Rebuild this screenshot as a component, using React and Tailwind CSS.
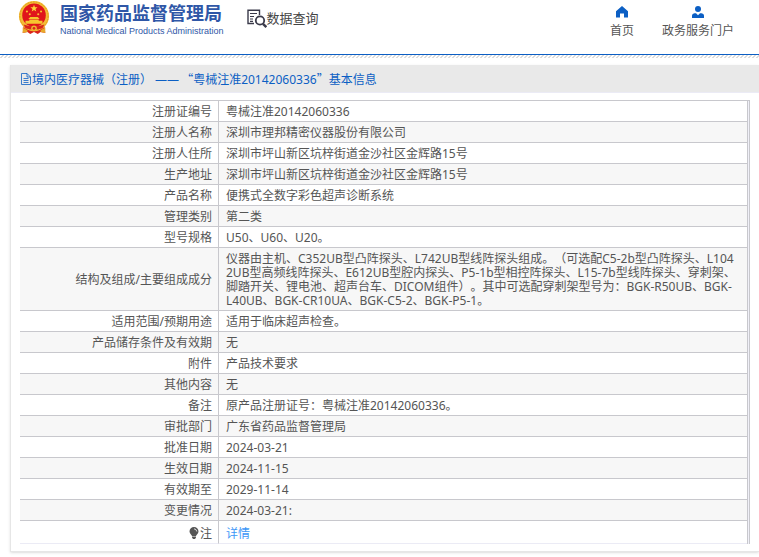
const rows = [
  { label: '注册证编号', value: '粤械注准20142060336' },
  { label: '注册人名称', value: '深圳市理邦精密仪器股份有限公司' },
  { label: '注册人住所', value: '深圳市坪山新区坑梓街道金沙社区金辉路15号' },
  { label: '生产地址', value: '深圳市坪山新区坑梓街道金沙社区金辉路15号' },
  { label: '产品名称', value: '便携式全数字彩色超声诊断系统' },
  { label: '管理类别', value: '第二类' },
  { label: '型号规格', value: 'U50、U60、U20。' },
  {
    label: '结构及组成/主要组成成分',
    value:
      '仪器由主机、C352UB型凸阵探头、L742UB型线阵探头组成。（可选配C5-2b型凸阵探头、L1042UB型高频线阵探头、E612UB型腔内探头、P5-1b型相控阵探头、L15-7b型线阵探头、穿刺架、脚踏开关、锂电池、超声台车、DICOM组件）。其中可选配穿刺架型号为：BGK-R50UB、BGK-L40UB、BGK-CR10UA、BGK-C5-2、BGK-P5-1。',
  },
  { label: '适用范围/预期用途', value: '适用于临床超声检查。' },
  { label: '产品储存条件及有效期', value: '无' },
  { label: '附件', value: '产品技术要求' },
  { label: '其他内容', value: '无' },
  { label: '备注', value: '原产品注册证号：粤械注准20142060336。' },
  { label: '审批部门', value: '广东省药品监督管理局' },
  { label: '批准日期', value: '2024-03-21' },
  { label: '生效日期', value: '2024-11-15' },
  { label: '有效期至', value: '2029-11-14' },
  { label: '变更情况', value: '2024-03-21:' },
];

const Emblem = () => (
  <svg viewBox="0 0 34 36" className="h-9 w-8 shrink-0" aria-hidden="true">
    <path d="M6 26l-1 8 5-1 3 2 4-2 4 2 3-2 5 1-1-8z" fill="#d9231c" />
    <path d="M5 28l5 3v2l-5 1zM29 28l-5 3v2l5 1z" fill="#e8a92a" />
    <circle cx="17" cy="16" r="16" fill="#f3bd35" />
    <circle cx="17" cy="16" r="15" fill="none" stroke="#e0981f" strokeWidth="1" strokeDasharray="2 1" />
    <circle cx="17" cy="15" r="12.5" fill="#e0151b" />
    <path d="M17 4l1 2.700h2.800l-2.200 1.700.8 2.700-2.400-1.600-2.400 1.600.8-2.700-2.200-1.700H16z" fill="#fbd63b" />
    <g fill="#f6c52f">
      <circle cx="9.500" cy="11" r="1.100" />
      <circle cx="12.500" cy="14" r="1.100" />
      <circle cx="21.500" cy="14" r="1.100" />
      <circle cx="24.500" cy="11" r="1.100" />
      <path d="M11 19l2-2h8l2 2zM12 19.500h10v1.500H12zM8 21h18v3H8z" />
    </g>
    <path d="M6 25q11 4 22 0l-2 4q-9 3-18 0z" fill="#d9231c" />
    <circle cx="17" cy="29" r="3" fill="#efb62e" />
    <circle cx="17" cy="29" r="1.400" fill="#d9231c" />
  </svg>
);

const SearchDocIcon = () => (
  <svg viewBox="0 0 20 20" className="size-5 shrink-0" fill="none" stroke="#3a3a4a" aria-hidden="true">
    <path d="M12.500 7V2.200H1v13.300h6" strokeWidth="1.400" />
    <path d="M3 5.500h7M3 8.500h4M3 11h3M3 13.300h3" strokeWidth="1.200" />
    <circle cx="13" cy="12.500" r="4.200" strokeWidth="1.800" />
    <path d="M16 15.800l3.300 3.300" strokeWidth="2.400" />
  </svg>
);

const HomeIcon = () => (
  <svg viewBox="0 0 12 12" className="size-3" fill="#0c5fc4" aria-hidden="true">
    <path d="M6 0L0 5.200V11.500h4V7.500h4v4h4V5.200z" />
  </svg>
);

const UserIcon = () => (
  <svg viewBox="0 0 12 12" className="size-3" fill="#0c5fc4" aria-hidden="true">
    <circle cx="6" cy="3" r="3" />
    <path d="M0 12V9.500Q0 7.500 2.500 7.200H4l2 2 2-2h1.500Q12 7.500 12 9.500V12z" />
  </svg>
);

const DocIcon = () => (
  <svg viewBox="0 0 10 12" className="h-3 w-2.5 shrink-0" fill="none" stroke="#0c5fc4" strokeWidth=".8" aria-hidden="true">
    <path d="M.5.500h5.500l3.500 3.500v7.500h-9zM6 .500V4h3.500M2.500 5.500h5M2.500 7.500h5M2.500 9.500h5" />
  </svg>
);

const BulbIcon = () => (
  <svg viewBox="0 0 10 12" className="mr-px inline-block h-3 w-2.5 align-[-1px]" aria-hidden="true">
    <path d="M5 0a4.500 4.500 0 0 1 4.500 4.500C9.500 6.500 7.500 7.500 7 9H3C2.500 7.500.5 6.500.5 4.500A4.500 4.500 0 0 1 5 0zM3 9.500h4v1L6 12H4l-1-1.500z" fill="#555" />
    <path d="M5 1.800q2.500.2 2.800 2.700" fill="none" stroke="#fff" strokeWidth=".8" />
  </svg>
);

const Header = () => (
  <header className="flex h-[55px] items-start border-b border-[#0c5fc4] bg-white pl-[18px]">
    <div className="flex gap-2.5">
      <Emblem />
      <div className="whitespace-nowrap text-[#2f57a7]">
        <p className="pt-px text-[18px] leading-6 font-bold">国家药品监督管理局</p>
        <p className="font-['Liberation_Sans',sans-serif] text-[9px] leading-3">
          National Medical Products Administration
        </p>
      </div>
    </div>
    <div className="flex items-start pt-2 pl-[23px] whitespace-nowrap text-[#444]">
      <SearchDocIcon />
      <h1 className="text-[13px] leading-5">数据查询</h1>
    </div>
    <nav className="ml-auto flex gap-7 pt-1.5 pr-[25px] text-[12px] leading-4 whitespace-nowrap text-[#555]">
      <a href="#home" className="flex flex-col items-center gap-[5px]">
        <HomeIcon />
        首页
      </a>
      <a href="#portal" className="flex flex-col items-center gap-[5px]">
        <UserIcon />
        政务服务门户
      </a>
    </nav>
  </header>
);

export default function App() {
  return (
    <div className="bg-white font-['Noto_Sans','Noto_Sans_CJK_SC',sans-serif] text-[12px] text-[#555] [text-spacing-trim:space-all]">
      <Header />
      <div className="h-[3px] bg-[linear-gradient(135deg,#fff_25%,#ddd_25%_50%,#fff_50%_75%,#ddd_75%)] bg-size-[4px_4px]" />
      <main className="mt-[7px] mb-1 ml-2.5 border-b border-l border-[#e6e6e6] pb-[7px] shadow-sm">
        <h2 className="flex h-7 items-center gap-px border-b border-[#ebebf5] bg-[#e9e9e9] pt-px pl-2.5 leading-4 text-[#0c5fc4]">
          <DocIcon />
          <span className="whitespace-pre">
            境内医疗器械（注册） ——
            <span className="pl-0.5 font-['Noto_Sans_CJK_SC',sans-serif]">“</span>
            粤械注准20142060336
            <span className="font-['Noto_Sans_CJK_SC',sans-serif]">”</span>
            基本信息
          </span>
        </h2>
        <div className="mt-[7px] mr-[9px] ml-[9px] border-t border-r border-[#c8c8cd] bg-[#f0f0f8] pr-px">
          <table className="w-full table-fixed border-separate border-spacing-0 border-r border-[#c8c8cd] bg-white leading-[14px]">
            <colgroup>
              <col className="w-[199px]" />
              <col />
            </colgroup>
            <tbody>
              {rows.map((row) => (
                <tr key={row.label} className="even:bg-[#f7f7f7]">
                  <th scope="row" className="border-r border-b border-[#c8c8cd] pt-1 pr-1.5 pb-0.5 text-right font-normal">
                    {row.label}
                  </th>
                  <td className="border-b border-[#c8c8cd] pt-1 pr-[9px] pb-0.5 pl-[7px] break-all">{row.value}</td>
                </tr>
              ))}
              <tr>
                <th scope="row" className="border-r border-b border-r-[#c8c8cd] border-b-[#ebebf5] pt-1.5 pr-1.5 pb-0.5 text-right font-normal">
                  <BulbIcon />注
                </th>
                <td className="border-b border-[#ebebf5] pt-1.5 pr-[9px] pb-0.5 pl-[7px]">
                  <a href="#detail" className="text-[#3d97f7]">详情</a>
                </td>
              </tr>
            </tbody>
          </table>
        </div>
      </main>
    </div>
  );
}
